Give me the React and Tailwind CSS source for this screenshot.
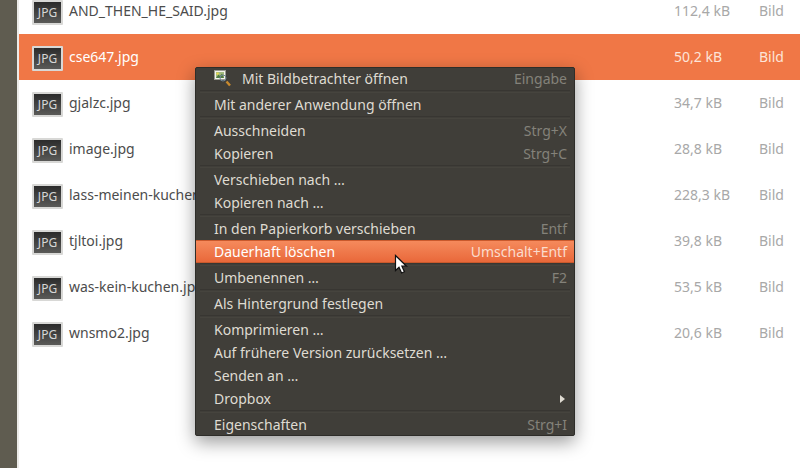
const files = [
  { name: "AND_THEN_HE_SAID.jpg", size: "112,4 kB" },
  { name: "cse647.jpg", size: "50,2 kB", selected: true },
  { name: "gjalzc.jpg", size: "34,7 kB" },
  { name: "image.jpg", size: "28,8 kB" },
  { name: "lass-meinen-kuchen.jpg", size: "228,3 kB" },
  { name: "tjltoi.jpg", size: "39,8 kB" },
  { name: "was-kein-kuchen.jpg", size: "53,5 kB" },
  { name: "wnsmo2.jpg", size: "20,6 kB" },
];

const menuGroups = [
  [{ label: "Mit Bildbetrachter öffnen", shortcut: "Eingabe", icon: true, short: true }],
  [{ label: "Mit anderer Anwendung öffnen" }],
  [{ label: "Ausschneiden", shortcut: "Strg+X" }, { label: "Kopieren", shortcut: "Strg+C" }],
  [{ label: "Verschieben nach …" }, { label: "Kopieren nach …" }],
  [{ label: "In den Papierkorb verschieben", shortcut: "Entf" }, { label: "Dauerhaft löschen", shortcut: "Umschalt+Entf", active: true }],
  [{ label: "Umbenennen …", shortcut: "F2" }],
  [{ label: "Als Hintergrund festlegen" }],
  [
    { label: "Komprimieren …" },
    { label: "Auf frühere Version zurücksetzen …" },
    { label: "Senden an …" },
    { label: "Dropbox", submenu: true },
  ],
  [{ label: "Eigenschaften", shortcut: "Strg+I", short: true }],
];

function JpgIcon() {
  return (
    <div className="mt-[3px] flex h-[25px] w-[31px] shrink-0 items-center justify-center rounded-[1px] border-2 border-[#d8d8d6] bg-gradient-to-b from-[#2c2c2c] to-[#5a5a58] text-[12px] leading-none text-[#d6d6d6]">
      JPG
    </div>
  );
}

function ViewerIcon() {
  return (
    <svg width="18" height="18" viewBox="0 0 18 18" className="absolute left-[18px] top-[2px]">
      <rect x="0.5" y="0.5" width="11" height="9" fill="#f4f4ec" stroke="#9a9a92" />
      <rect x="2" y="2" width="8" height="6" fill="#a3bb80" />
      <path d="M2 8 L4.5 4.5 L6 6 L8 3.5 L10 8 Z" fill="#4f7a42" />
      <circle cx="3.6" cy="3.6" r="1.2" fill="#f0d848" />
      <circle cx="9" cy="8" r="3" fill="none" stroke="#6f8494" strokeWidth="1" />
      <path d="M12.5 11.5 L16 15.5" stroke="#c98a2e" strokeWidth="2.4" />
    </svg>
  );
}

function MenuRow({ item }) {
  return (
    <div
      className={`relative flex items-center justify-between pl-[18px] pr-[7px] ${item.short ? "h-[22px]" : "h-[23px]"} ${item.icon ? "pb-[1px]" : ""} ${
        item.active
          ? "border-y border-y-[#c9592c] bg-gradient-to-b from-[#f58a5c] to-[#e9683a] text-white"
          : "text-[#dfdbd2]"
      }`}
    >
      {item.icon && <ViewerIcon />}
      <span className={item.icon ? "pl-[28px]" : ""}>{item.label}</span>
      {item.shortcut && (
        <span className={item.active ? "text-[#fbdccd]" : "text-[#84827a]"}>{item.shortcut}</span>
      )}
      {item.submenu && (
        <span className="mr-[2px] h-0 w-0 border-y-[4px] border-l-[5px] border-y-transparent border-l-[#dfdbd2]" />
      )}
    </div>
  );
}

export default function App() {
  return (
    <div
      className="relative flex h-[468px] w-[800px] overflow-hidden bg-white text-[14px]"
      style={{ fontFamily: '"Noto Sans", "Open Sans", sans-serif' }}
    >
      <div className="w-[17px] shrink-0 bg-[#5f5c50]" />
      <div className="w-[2px] shrink-0 bg-[#ecebe8]" />
      <div className="min-w-0 flex-1 -mt-[12px]">
        {files.map((file) => (
          <div
            key={file.name}
            className={`flex h-[46px] items-center pl-[13px] ${
              file.selected ? "bg-[#f07746] text-white" : "text-[#4c4c4c]"
            }`}
          >
            <JpgIcon />
            <span className="mb-[2px] ml-[6px] flex-1 whitespace-nowrap">{file.name}</span>
            <span className={`mb-[2px] w-[85px] ${file.selected ? "text-[#fde4d8]" : "text-[#a8a8a8]"}`}>{file.size}</span>
            <span className={`mb-[2px] w-[41px] ${file.selected ? "text-[#fde4d8]" : "text-[#a8a8a8]"}`}>Bild</span>
          </div>
        ))}
      </div>

      <div className="absolute left-[195px] top-[67px] w-[380px] rounded-[2px] border border-[#2e2d29] bg-[#403e39] shadow-[0_6px_18px_rgba(0,0,0,0.4)]">
        {menuGroups.map((group, i) => (
          <div key={i}>
            {i > 0 && (
              <div className="mx-[4px] h-[3px] border-b border-b-[#46443e] border-t border-t-[#383632]" />
            )}
            {group.map((item) => (
              <MenuRow key={item.label} item={item} />
            ))}
          </div>
        ))}
      </div>

      {/* mouse pointer */}
      <svg width="16" height="22" viewBox="0 0 16 22" className="absolute left-[394px] top-[254px]">
        <path d="M1.5 1.5 L1.5 16.5 L5 13.2 L7.6 19 L10.4 17.8 L7.9 12.2 L12.5 12.2 Z" fill="#fff" stroke="#111" strokeWidth="1.2" />
      </svg>
    </div>
  );
}
